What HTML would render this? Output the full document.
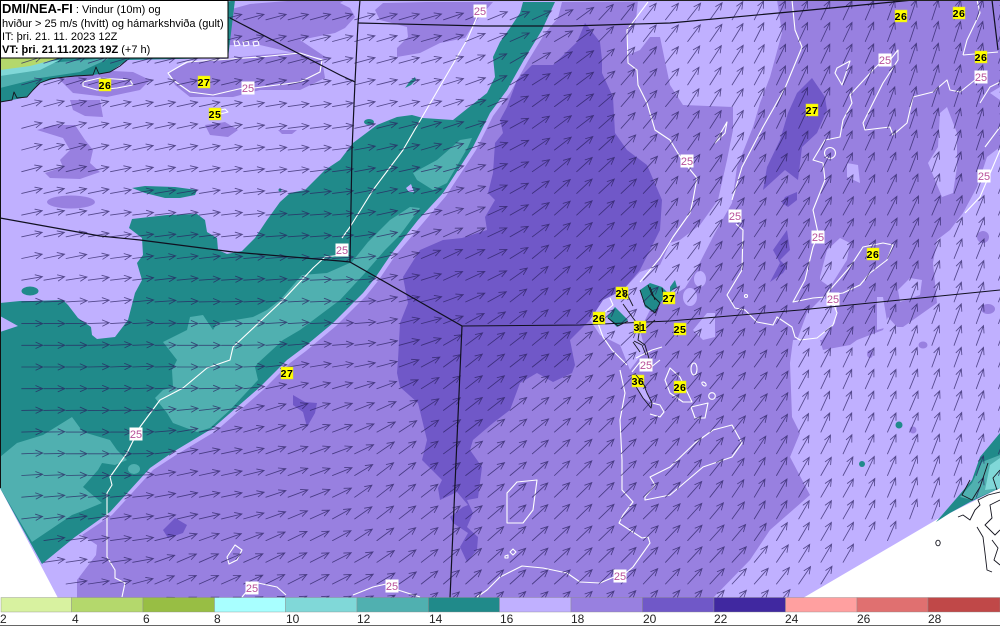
<!DOCTYPE html>
<html lang="is">
<head>
<meta charset="utf-8">
<title>DMI/NEA-FI</title>
<style>
html,body{margin:0;padding:0;background:#fff;width:1000px;height:626px;overflow:hidden}
svg{display:block;position:absolute;left:0;top:0}
text{font-family:"Liberation Sans",sans-serif}
.c{fill:none;stroke:#fff;stroke-width:1.1;stroke-linejoin:round}
.g{fill:none;stroke:#101020;stroke-width:1.2}
.k{fill:none;stroke:#15151f;stroke-width:.9;stroke-linejoin:round}
.y rect{fill:#ffff00;stroke:#d8d840;stroke-width:.5}
.y text{font-size:10.5px;font-weight:bold;fill:#000;text-anchor:middle;letter-spacing:.6px}
.w rect{fill:#fff}
.w text{font-size:11px;fill:#b8509a;text-anchor:middle}
.b text{font-size:12px;fill:#222}
.l text{font-size:11px;fill:#000}
</style>
</head>
<body>
<svg width="1000" height="626" viewBox="0 0 1000 626" xmlns="http://www.w3.org/2000/svg">
<rect width="1000" height="626" fill="#fff"/>
<polygon fill="#c0b0ff" points="0,0 1000,0 1000,488 936,520 803,598 58,598 0,488"/>

<g fill="#9880e0">
<polygon points="77,598 77,580 96,555 97,545 82,535 112,515 153,470 176,455 216,431 263,390 290,363 306,351 336,326 366,296 378,281 395,256 423,223 446,196 476,150 493,116 510,93 528,61 545,33 558,18 562,2 1000,0 1000,147 987,157 977,187 963,213 950,230 937,240 933,263 937,303 903,327 897,327 888,317 883,330 857,340 850,345 823,350 820,340 793,340 790,363 792,417 800,433 790,457 810,495 770,530 750,560 713,598"/>
<polygon points="375,10 383,3 427,2 493,2 477,20 470,30 465,38 440,43 420,53 397,57 397,48 408,37 407,27 380,20"/>
<polygon points="340,3 350,8 355,17 345,28 335,33 300,40 330,60 290,52 260,45 228,45 228,10 250,4 300,0 345,0"/>
<polygon points="168,72 190,62 260,55 300,52 322,60 325,78 300,90 260,90 233,97 190,97 175,85"/>
<polygon points="60,80 93,70 133,72 150,80 140,90 107,97 73,93"/>
<polygon points="70,100 100,100 103,117 85,116 73,110"/>
<polygon points="205,125 225,122 238,130 228,137 210,135"/>
<polygon points="37,130 53,125 75,125 85,140 93,150 90,163 100,172 80,179 50,178 45,173 63,167 60,160 70,150 63,138"/>
<polygon points="278,130 297,130 292,134 282,134"/>
<ellipse cx="71" cy="202" rx="24" ry="6.5"/>
<ellipse cx="983" cy="237" rx="6" ry="6"/>
<ellipse cx="988" cy="309" rx="7" ry="5"/>
<ellipse cx="923" cy="345" rx="4.5" ry="3.5"/>
<ellipse cx="870" cy="354" rx="3" ry="4"/>
<ellipse cx="913" cy="430" rx="3.5" ry="3.5"/>
</g>

<g fill="#c0b0ff">
<polygon points="638,0 777,0 782,33 770,77 760,103 753,127 737,167 732,203 715,233 695,272 685,288 672,296 660,292 650,310 640,330 645,350 630,370 620,345 600,335 590,320 603,300 623,290 640,272 660,265 670,243 680,240 700,225 718,200 727,160 733,130 733,107 683,105 670,85 660,37 650,37 640,50 628,55 628,35 636,20"/>
<ellipse cx="700" cy="279" rx="6" ry="8"/>
<ellipse cx="690" cy="297" rx="7" ry="9"/>
<polygon points="707,313 715,313 715,337 703,340 693,330"/>
<polygon points="820,277 827,250 840,238 850,243 847,260 830,287 820,280"/>
<polygon points="797,340 807,313 823,297 837,307 835,323 822,340"/>
<polygon points="898,290 910,278 922,280 920,295 900,302"/>
<polygon points="877,297 883,297 888,327 877,330"/>
<polygon points="947,107 957,133 957,167 953,193 942,197 928,163 938,147 940,113"/>
<polygon points="847,163 858,165 860,183 847,177"/>
<polygon points="1000,87 990,93 1000,100"/>
</g>

<g fill="#7058c8">
<polygon points="585,23 600,42 602,60 602,73 613,97 615,133 627,150 647,165 662,200 660,230 650,250 640,270 623,290 603,300 590,320 570,340 575,365 572,373 553,382 537,373 520,383 510,410 493,423 473,440 470,450 482,467 478,498 467,500 473,513 467,527 478,537 477,550 467,562 460,547 468,533 453,523 450,517 463,507 468,505 457,492 440,500 438,488 442,480 422,460 427,440 418,403 400,387 397,373 398,360 400,323 408,303 403,277 420,250 443,240 462,238 487,230 485,217 495,200 488,193 493,173 495,143 503,133 500,120 507,107 517,80 532,65 553,65 577,42"/>
<polygon points="812,78 825,97 827,110 817,133 802,147 798,180 785,170 763,190 767,167 780,140 788,113 797,93"/>
<polygon points="785,197 797,192 797,200 788,207 782,203"/>
<polygon points="773,250 787,230 790,250 780,260 787,267 783,273 770,282 780,263"/>
<polygon points="293,395 305,402 317,403 315,413 307,427 303,412 293,405"/>
<polygon points="163,530 175,518 187,525 183,533 168,538"/>
</g>

<g fill="#208a8a">
<polygon points="523,2 520,13 510,28 500,42 493,57 495,77 487,93 468,108 453,120 423,118 412,115 397,117 377,125 353,143 340,160 325,170 313,182 305,190 290,193 280,202 267,220 255,238 242,251 227,254 218,250 217,238 207,232 205,220 197,214 167,215 132,219 129,228 142,238 143,255 137,263 142,280 135,293 128,320 115,337 97,339 92,335 91,327 78,318 68,305 63,300 33,301 20,301 0,303 0,316 18,326 0,332 0,488 42,564 75,537 110,512 150,468 173,452 213,428 260,387 287,360 303,348 333,323 363,293 375,278 392,253 418,220 443,193 473,147 490,113 507,90 525,58 542,30 555,2"/>
<polygon points="132,188 145,186 175,187 197,190 195,195 180,198 165,198 145,193"/>
<ellipse cx="30" cy="291" rx="8.5" ry="4.5"/>
<ellipse cx="369" cy="122" rx="5" ry="3"/>
<polygon points="405,88 410,81 415,77 416,80 411,85"/>
<circle cx="280" cy="190" r="1.5"/>
<circle cx="899" cy="425" r="3.5"/>
<circle cx="862" cy="464" r="3"/>
<polygon points="936,522 955,500 972,480 980,457 1000,433 1000,488 970,502 950,513"/>
</g>

<g fill="#50b0b0">
<polygon points="163,342 187,330 190,317 203,315 213,330 217,323 253,317 267,310 280,300 302,275 327,273 352,262 368,242 373,237 390,220 410,207 420,208 400,235 385,250 365,273 340,300 300,330 283,340 258,363 255,367 258,380 230,410 210,428 197,432 173,423 167,413 155,398 163,390 173,387 172,370 177,360"/>
<polygon points="413,173 437,160 460,140 472,138 468,147 447,183 433,190 417,180"/>
<polygon points="0,457 17,443 43,435 72,417 83,432 110,440 117,450 127,460 115,465 102,463 98,470 83,487 102,503 85,510 72,515 32,542 0,488"/>
<ellipse cx="134" cy="469" rx="6" ry="5"/>
<polygon points="960,497 972,483 982,462 1000,455 1000,488 972,500"/>
</g>
<polygon fill="#80d8d8" points="985,490 990,465 1000,458 1000,488"/>
<polygon fill="#c0b0ff" points="406,188 411,184 414,192 409,192"/>

<polygon fill="#208a8a" points="0,58 235,0 228,58 127,60 110,72 93,75 57,78 40,83 27,97 12,100 0,102"/>
<polygon fill="#50b0b0" points="0,72 60,62 110,58 80,72 40,78 0,88"/>
<polygon fill="#80d8d8" points="0,66 60,60 40,70 0,76"/>
<polygon fill="#b4d86c" points="0,58 60,58 30,66 0,70"/>
<path class="k" d="M0,102 12,100 14,92 17,98 27,97 33,90 40,83 50,79 57,78 75,76 93,75 96,67 99,74 110,72 120,66 127,60" stroke-width="1.4"/>

<g fill="#208a8a">
<polygon points="640,290 650,283 662,287 668,293 660,303 655,313 645,307"/>
<polygon points="670,287 675,280 677,287 670,292"/>
<polygon points="607,317 615,307 628,320 617,327"/>
</g>
<polygon fill="#c0b0ff" points="633,375 643,383 647,393 652,403 643,398 635,385"/>

<g>
<path class="c" d="M648,2 627,30 628,63 637,70 638,85 647,103 655,130 670,140 682,160 697,178 693,200 690,213 673,237 660,258 640,282"/>
<path class="c" d="M477,17 467,40 428,107 403,150 373,190 350,227 342,238 M342,255 325,257 313,268 283,300 233,347 230,360 207,368 183,388 160,400 140,427 127,453 110,477 112,485 107,493 107,557 115,570 115,578 125,583 122,597"/>
<path class="c" d="M83,82 100,78 130,80 133,85 117,88 97,90 83,86Z"/>
<path class="c" d="M260,57 187,62 168,73 173,80 190,92 213,95 243,88 M254,88 300,82 320,72 322,60 300,53 260,57"/>
<path class="c" d="M217,111 225,109 228,112 220,114Z"/>
<path class="c" d="M234,41 238,41 240,45 235,46Z M243,42 248,41 249,45 244,46Z M253,42 258,41 259,45 254,46Z"/>
<path class="c" d="M792,0 795,30 802,47 785,88 763,127 742,167 732,200 M736,224 743,230 742,270 727,295 735,308 745,310 757,322 773,325 777,317 792,327 795,337 800,340 817,338 833,325 837,313 833,302"/>
<path class="c" d="M825,297 813,298 793,302 805,280 813,247 816,240 M818,233 813,210 825,180 823,163 813,160 825,140 840,137 843,120 852,103 850,95 873,70 880,63 M890,60 898,50 898,60 883,83 863,123 865,130 890,127 893,135 907,123 913,97 933,92 947,80 950,90 960,92 975,80"/>
<path class="c" d="M963,55 967,40 980,13 977,0 M963,55 998,52"/>
<path class="c" d="M837,68 850,61 847,70 842,85 835,73Z"/>
<circle class="c" cx="830" cy="153" r="5.5"/>
<path class="c" d="M715,143 727,122 725,133Z"/>
<path class="c" d="M828,292 850,267 863,247 883,243 893,245 887,260 870,273 860,285 843,293 830,295Z"/>
<path class="c" d="M965,213 980,197 1000,150 M985,147 1000,127 M980,103 990,87 1000,82"/>
<path class="c" d="M610,298 613,305 605,312 595,315 603,337 612,350 622,360 627,365 M636,358 652,350 662,347"/>
<path class="c" d="M620,370 625,393 620,420 622,460 622,490 633,502 623,515 619,523 642,538 648,537 650,543 633,567 626,573 M614,577 600,583 580,582 567,573 543,568 522,566 500,577 487,590 477,597"/>
<path class="c" d="M507,493 517,482 537,480 533,510 523,523 507,523Z"/>
<path class="c" d="M353,595 373,587 386,584 M398,590 420,597"/>
<path class="c" d="M242,597 248,590 M258,583 277,587 286,595"/>
<path class="c" d="M227,557 235,545 242,550 237,560 229,564Z"/>
<path class="c" d="M645,497 655,485 650,477 670,467 695,443 713,430 732,425 742,443 732,457 703,467 670,495 645,500Z"/>
<path class="c" d="M670,368 680,377 692,402 683,402 670,393 665,380Z"/>
<ellipse class="c" cx="694" cy="369" rx="3" ry="6"/>
<ellipse class="c" cx="704" cy="384" rx="2.5" ry="1.5" transform="rotate(40 704 384)"/>
<circle class="c" cx="712" cy="396" r="3.3"/>
<path class="c" d="M691,407 708,403 705,418 695,418Z"/>
<path class="c" d="M644,360 650,368 660,360 M632,372 640,362 M652,403 660,405 664,412 660,417 650,414"/>
<path class="c" d="M510,552 513,549 516,552 513,555Z M505,556 508,555 508,558 505,558Z" stroke-width=".9"/>
<circle class="c" cx="746" cy="296" r="1.5" stroke-width=".8"/>
</g>

<path id="arrows" fill="none" stroke="#2a2060" stroke-width=".85" stroke-opacity=".72" stroke-linecap="round" d=""/>

<g class="g">
<path d="M230,18 340,75 355,82"/>
<path d="M360,0 358,23 355,82 352,150 350,262 462,326 450,598"/>
<path d="M358,23 483,26 570,26 670,23 800,11 913,0"/>
<path d="M0,218 100,236 140,240 233,252 340,261 350,262"/>
<path d="M462,326 580,325 670,321 800,310 1000,290" stroke-width="1"/>
<path d="M992,0 998,50"/>
</g>

<g class="k">
<path d="M640,290 645,305 655,313 660,303 652,295 648,285 M650,287 655,300 M662,288 664,300 M608,318 618,326 628,321 M623,304 633,318 640,327 638,340 645,345 650,362 M633,342 640,352 M628,296 633,306 M626,290 628,300 M636,322 646,328 655,320"/>
<path d="M633,375 643,383 647,393 652,403 651,408 643,398 635,385Z"/>
<path d="M634,341 642,345 646,355"/>
<path d="M958,517 963,515 970,520 975,510 980,505 978,500 988,495 1000,492"/>
<path d="M977,527 983,537 985,553 987,570 992,572"/>
<path d="M988,463 980,487 972,500 962,495 970,480"/>
<path d="M1000,500 990,505 992,518 985,525 995,535 1000,530 M992,540 998,548 994,560 1000,565 M1000,470 993,478 997,490"/>
<ellipse cx="938" cy="543" rx="2.2" ry="2.8"/>
</g>

<g class="w">
<g transform="translate(480,11)"><rect x="-6.5" y="-6.5" width="13" height="13"/><text y="4">25</text></g>
<g transform="translate(248,88)"><rect x="-6.5" y="-6.5" width="13" height="13"/><text y="4">25</text></g>
<g transform="translate(342,250)"><rect x="-6.5" y="-6.5" width="13" height="13"/><text y="4">25</text></g>
<g transform="translate(136,434)"><rect x="-6.5" y="-6.5" width="13" height="13"/><text y="4">25</text></g>
<g transform="translate(252,588)"><rect x="-6.5" y="-6.5" width="13" height="13"/><text y="4">25</text></g>
<g transform="translate(392,586)"><rect x="-6.5" y="-6.5" width="13" height="13"/><text y="4">25</text></g>
<g transform="translate(620,576)"><rect x="-6.5" y="-6.5" width="13" height="13"/><text y="4">25</text></g>
<g transform="translate(646,365)"><rect x="-6.5" y="-6.5" width="13" height="13"/><text y="4">25</text></g>
<g transform="translate(687,161)"><rect x="-6.5" y="-6.5" width="13" height="13"/><text y="4">25</text></g>
<g transform="translate(735,216)"><rect x="-6.5" y="-6.5" width="13" height="13"/><text y="4">25</text></g>
<g transform="translate(885,60)"><rect x="-6.5" y="-6.5" width="13" height="13"/><text y="4">25</text></g>
<g transform="translate(981,77)"><rect x="-6.5" y="-6.5" width="13" height="13"/><text y="4">25</text></g>
<g transform="translate(818,237)"><rect x="-6.5" y="-6.5" width="13" height="13"/><text y="4">25</text></g>
<g transform="translate(833,299)"><rect x="-6.5" y="-6.5" width="13" height="13"/><text y="4">25</text></g>
<g transform="translate(984,176)"><rect x="-6.5" y="-6.5" width="13" height="13"/><text y="4">25</text></g>
</g>

<g class="y">
<g transform="translate(105,85)"><rect x="-6" y="-6" width="12" height="12"/><text y="4">26</text></g>
<g transform="translate(204,82)"><rect x="-6" y="-6" width="12" height="12"/><text y="4">27</text></g>
<g transform="translate(215,114)"><rect x="-6" y="-6" width="12" height="12"/><text y="4">25</text></g>
<g transform="translate(287,373)"><rect x="-6" y="-6" width="12" height="12"/><text y="4">27</text></g>
<g transform="translate(901,16)"><rect x="-6" y="-6" width="12" height="12"/><text y="4">26</text></g>
<g transform="translate(959,13)"><rect x="-6" y="-6" width="12" height="12"/><text y="4">26</text></g>
<g transform="translate(981,57)"><rect x="-6" y="-6" width="12" height="12"/><text y="4">26</text></g>
<g transform="translate(812,110)"><rect x="-6" y="-6" width="12" height="12"/><text y="4">27</text></g>
<g transform="translate(873,254)"><rect x="-6" y="-6" width="12" height="12"/><text y="4">26</text></g>
<g transform="translate(622,293)"><rect x="-6" y="-6" width="12" height="12"/><text y="4">28</text></g>
<g transform="translate(669,298)"><rect x="-6" y="-6" width="12" height="12"/><text y="4">27</text></g>
<g transform="translate(599,318)"><rect x="-6" y="-6" width="12" height="12"/><text y="4">26</text></g>
<g transform="translate(640,327)"><rect x="-6" y="-6" width="12" height="12"/><text y="4">31</text></g>
<g transform="translate(680,329)"><rect x="-6" y="-6" width="12" height="12"/><text y="4">25</text></g>
<g transform="translate(638,381)"><rect x="-6" y="-6" width="12" height="12"/><text y="4">36</text></g>
<g transform="translate(680,387)"><rect x="-6" y="-6" width="12" height="12"/><text y="4">26</text></g>
</g>
<path class="k" d="M636,375 642,382 646,388 M622,288 626,298 M640,322 640,332"/>

<path d="M.5,0V488" stroke="#111" stroke-width="1"/>
<path d="M0,.5H1000" stroke="#222" stroke-width="1"/>

<rect x="0.5" y="0.5" width="227.5" height="57.5" fill="#fff" stroke="#000" stroke-width="1"/>
<g class="l">
<text x="2" y="13"><tspan font-weight="bold" font-size="13">DMI/NEA-FI</tspan> : Vindur (10m) og</text>
<text x="2" y="27">hviður &gt; 25 m/s (hvítt) og hámarkshviða (gult)</text>
<text x="2" y="40">IT: þri. 21. 11. 2023 12Z</text>
<text x="2" y="53"><tspan font-weight="bold">VT: þri. 21.11.2023 19Z</tspan> (+7 h)</text>
</g>

<rect x="0" y="598" width="1000" height="28" fill="#fff"/>
<g stroke="#8a8a8a" stroke-width=".4">
<rect x="1" y="597.5" width="70.5" height="14.5" fill="#d8f2a0"/>
<rect x="71.5" y="597.5" width="71.5" height="14.5" fill="#b4d86c"/>
<rect x="143" y="597.5" width="71.5" height="14.5" fill="#98be44"/>
<rect x="214.5" y="597.5" width="71" height="14.5" fill="#a8ffff"/>
<rect x="285.5" y="597.5" width="71.5" height="14.5" fill="#80d8d8"/>
<rect x="357" y="597.5" width="71.5" height="14.5" fill="#50b0b0"/>
<rect x="428.5" y="597.5" width="71" height="14.5" fill="#208a8a"/>
<rect x="499.5" y="597.5" width="71.5" height="14.5" fill="#c0b0ff"/>
<rect x="571" y="597.5" width="71.5" height="14.5" fill="#9880e0"/>
<rect x="642.5" y="597.5" width="71.5" height="14.5" fill="#7058c8"/>
<rect x="714" y="597.5" width="71.5" height="14.5" fill="#4028a0"/>
<rect x="785.5" y="597.5" width="71.5" height="14.5" fill="#ffa0a0"/>
<rect x="857" y="597.5" width="71" height="14.5" fill="#e07070"/>
<rect x="928" y="597.5" width="72" height="14.5" fill="#c04848"/>
</g>
<g class="b">
<text x="0" y="623">2</text><text x="72" y="623">4</text><text x="143" y="623">6</text><text x="214" y="623">8</text>
<text x="286" y="623">10</text><text x="357" y="623">12</text><text x="429" y="623">14</text><text x="500" y="623">16</text>
<text x="571" y="623">18</text><text x="643" y="623">20</text><text x="714" y="623">22</text><text x="785" y="623">24</text>
<text x="857" y="623">26</text><text x="928" y="623">28</text>
</g>
<path d="M0,625.5H1000" stroke="#666" stroke-width="1"/>
</svg>
<script>
(function(){
var S=[[30,150,15],[150,150,12],[300,150,7],[30,235,12],[150,235,7],[300,235,4],[30,345,0],[200,345,0],[330,300,2],[100,450,0],[100,540,8],[200,480,12],[300,450,20],[300,590,27],[190,590,24],
[60,30,18],[260,30,15],[400,30,16],[500,30,22],[400,100,14],[450,120,18],[400,200,12],[400,300,14],[450,260,25],[520,60,30],[560,100,37],[600,200,43],[650,100,50],[650,30,52],[560,300,42],[480,380,38],
[400,500,38],[600,500,44],[500,590,42],[700,590,47],[700,100,58],[800,100,65],[950,100,72],[800,20,65],[950,20,72],[700,200,55],[800,300,60],[950,350,70],[950,500,70],[700,400,50],[800,500,60],[860,420,66]];
function ang(x,y){var a=0,w=0;for(var i=0;i<S.length;i++){var d=S[i],dx=x-d[0],dy=y-d[1],r=dx*dx+dy*dy+40,k=1/(r*r);a+=k*d[2];w+=k}return a/w*Math.PI/180}
var L=21,H=7.5,B=.42,p=[];
function f(n){return n.toFixed(1)}
for(var r=-1;r<28;r++){var y=19.8+21.7*r;
 for(var c=0;c<45;c++){var x=21.7+22.2*c;
  if(y>488&&x<(y-488)*.53)continue;
  if(x>803-(y-598)/.577)continue;
  var t=ang(x,y),hx=x+L*Math.cos(t),hy=y-L*Math.sin(t);
  var a1=t+Math.PI-B,a2=t+Math.PI+B;
  p.push("M"+f(x)+","+f(y)+"L"+f(hx)+","+f(hy)+"M"+f(hx+H*Math.cos(a1))+","+f(hy-H*Math.sin(a1))+"L"+f(hx)+","+f(hy)+"L"+f(hx+H*Math.cos(a2))+","+f(hy-H*Math.sin(a2)));
 }}
document.getElementById("arrows").setAttribute("d",p.join(""));
})();
</script>
</body>
</html>
